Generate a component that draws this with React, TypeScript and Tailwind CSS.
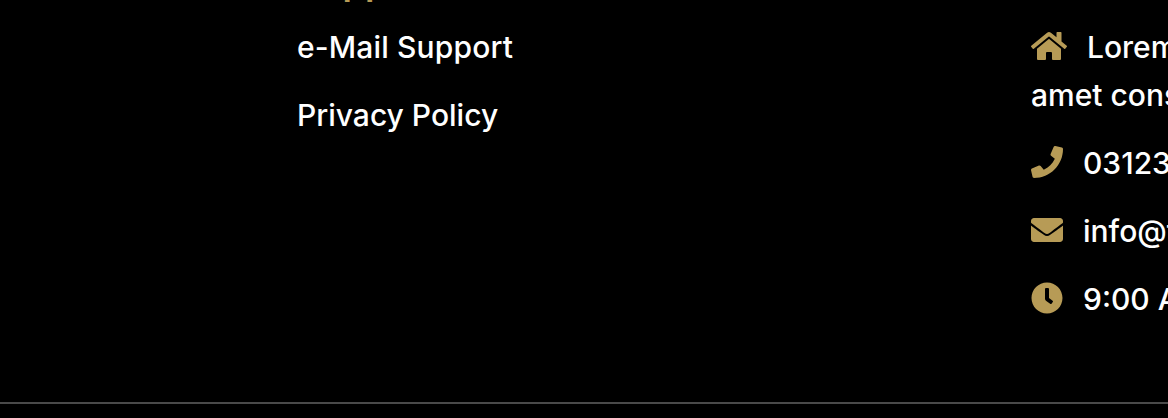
import { FaClock, FaEnvelope, FaHome, FaPhone } from "react-icons/fa";

const gold = "text-[#b79b56]";

function ContactRow({ icon, text }: { icon: React.ReactNode; text: string }) {
  return (
    <div className="flex h-[68px] items-center gap-[20px] whitespace-nowrap">
      {icon}
      <span>{text}</span>
    </div>
  );
}

export default function App() {
  return (
    <div className="h-[418px] w-[1168px] overflow-hidden bg-black font-['Inter',sans-serif] text-[30px] font-[450] leading-[48px] text-white">
      <div className="flex h-[402px]">
        {/* Support links */}
        <div className="ml-[297px] w-[734px] shrink-0">
          <h4 className={`-mt-[42px] h-[55px] text-[36px] font-semibold ${gold}`}>Support</h4>
          <div className="flex h-[68px] items-center whitespace-nowrap tracking-[0.15px]">e-Mail Support</div>
          <div className="flex h-[68px] items-center whitespace-nowrap">Privacy Policy</div>
        </div>

        {/* Contact */}
        <div className="w-[600px] shrink-0 pt-[23px]">
          <div className="w-[600px]">
            <div className="flex items-center gap-[20px] whitespace-nowrap">
              <FaHome className={`mb-[2px] h-[32px] w-[36px] ${gold}`} />
              <span>Lorem ipsum dolor sit</span>
            </div>
            <div className="whitespace-nowrap">amet consectetur</div>
          </div>
          <div className="mt-[10px]">
            <ContactRow icon={<FaPhone className={`mb-[2px] h-[32px] w-[32px] ${gold}`} />} text="03123456789" />
            <ContactRow icon={<FaEnvelope className={`mb-[2px] h-[32px] w-[32px] ${gold}`} />} text="info@test.com" />
            <ContactRow icon={<FaClock className={`mb-[2px] h-[32px] w-[32px] ${gold}`} />} text="9:00 AM - 5:00 PM" />
          </div>
        </div>
      </div>
      <div className="h-[2px] bg-[#4a4a4a]" />
    </div>
  );
}
